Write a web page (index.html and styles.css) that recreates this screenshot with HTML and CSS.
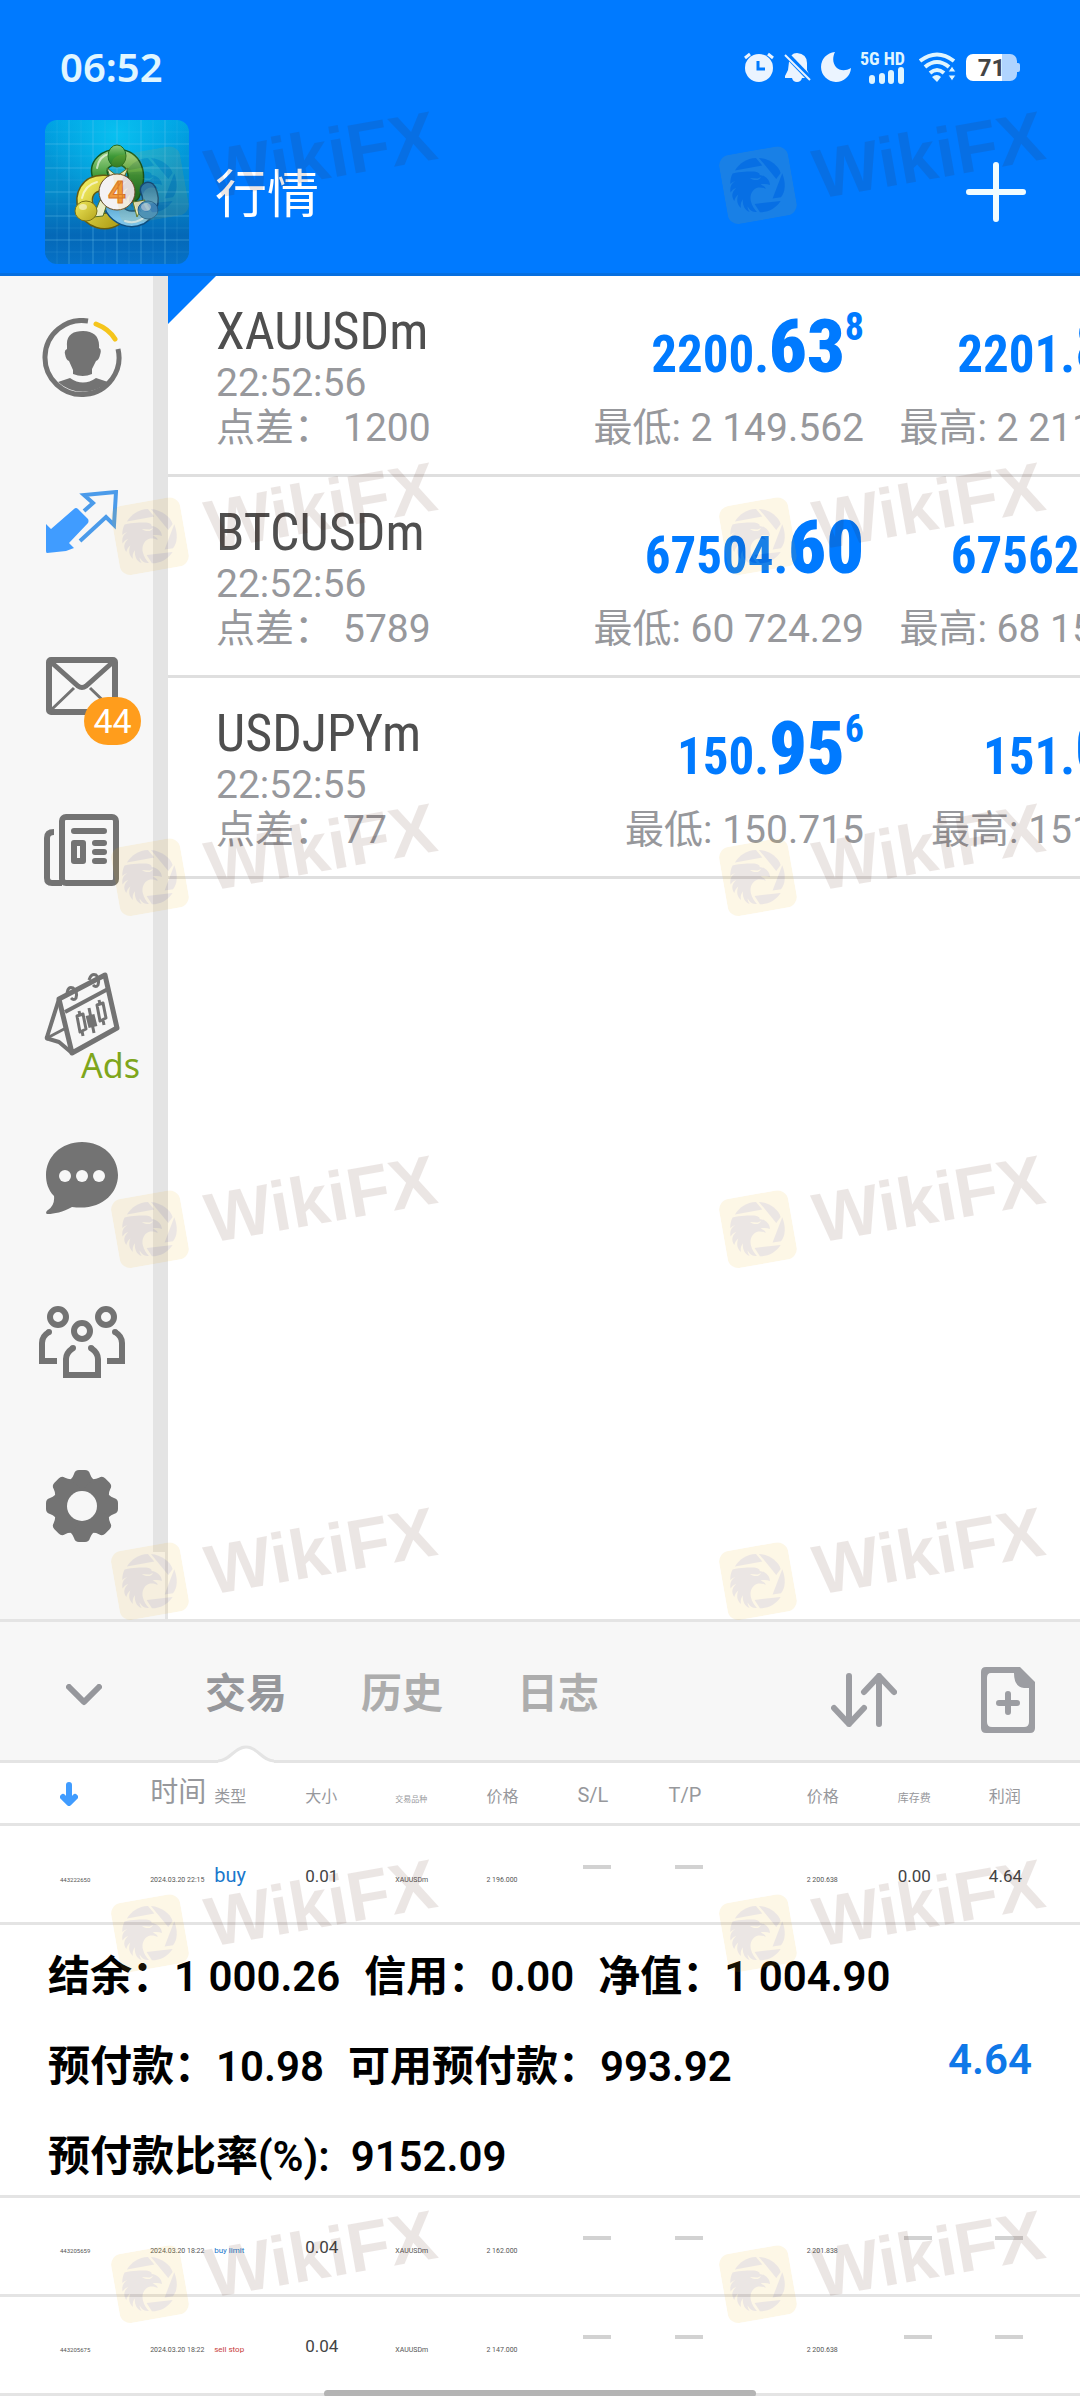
FILE: index.html
```html
<!DOCTYPE html>
<html lang="zh-CN">
<head>
<meta charset="utf-8">
<meta name="viewport" content="width=device-width">
<title>行情</title>
<link rel="stylesheet" href="styles.css">
</head>
<body>
<svg class="defs" aria-hidden="true">
  <symbol id="eagle" viewBox="0 0 70 70">
    <rect class="tile" width="70" height="70" rx="11"/>
    <g transform="translate(35 35) rotate(10) scale(.3333) translate(-181 -298)">
      <path d="M112 254C124 232 148 217 175 216L194 239Z"/>
      <path d="M184 216C215 219 242 238 249 261L236 279Z"/>
      <path d="M254 262C265 290 264 318 250 334L225 338Z"/>
      <path d="M171 354L249 345C235 367 212 379 187 379Z"/>
      <path d="M105 263C130 257 155 257 170 257C181 259 187 262 186 267C202 268 217 282 217 297C208 293 198 294 189 295C198 301 204 303 204 309C198 305 186 303 177 306C161 313 156 331 160 347C163 360 170 370 178 378C163 380 156 372 150 362C150 368 152 373 156 378C140 374 134 355 136 340C128 350 129 360 130 366C118 356 116 342 122 326C115 332 112 338 110 345C100 330 103 318 116 306C108 308 102 314 99 320C96 304 100 294 113 285C107 287 102 290 98 294C98 282 100 272 105 263Z"/>
      <path class="tile" d="M157 276L180 278L190 273C187 283 172 287 157 276Z"/>
    </g>
  </symbol>
</svg>
<div class="app">
  <header class="header">
    <div class="status">
      <time class="clock">06:52</time>
      <div class="status-icons">
        <svg width="30" height="30" viewBox="0 0 30 30"><circle cx="15" cy="16" r="14" fill="#ebf4ff"/><path d="M1 6L6 2M24 2L29 6" stroke="#ebf4ff" stroke-width="3"/><path d="M14 9V17H21" fill="none" stroke="#007aff" stroke-width="3"/></svg>
        <svg width="27" height="30" viewBox="0 0 27 30"><path d="M5 10Q6 1 13 1Q23 2 23 11V18L26 24V26H18Q17 30 13 30Q9 30 8 26H1V24L4 18Z" fill="#ebf4ff"/><path d="M0 0L28 29" stroke="#007aff" stroke-width="6"/><path d="M1 3L26 28" stroke="#ebf4ff" stroke-width="2"/></svg>
        <svg width="30" height="30" viewBox="0 0 30 30"><path d="M14 0A15 15 0 1 0 30 16C18 23 8 12 14 0Z" fill="#ebf4ff"/></svg>
        <div class="signal"><span>5G HD</span><svg width="36" height="17" viewBox="0 0 36 17"><path d="M3 11V14M13 9V14M22 6V14M32 3V14" stroke="#dff5ff" stroke-width="6" stroke-linecap="round"/></svg></div>
        <svg width="37" height="30" viewBox="0 0 37 30"><g fill="none" stroke="#dff5ff" stroke-width="4"><path d="M1 9Q18 -4 35 9"/><path d="M6 15Q18 5 30 15"/><path d="M11 21Q18 15 25 21"/></g><path d="M13 25Q18 21 22 25L18 30Z" fill="#dff5ff"/><path d="M29 20L33 14L37 20ZM29 23H37L33 29Z" fill="#dff5ff" stroke="#007aff"/></svg>
        <div class="battery"><span>71</span></div>
      </div>
    </div>
    <div class="appbar">
      <svg class="logo" width="144" height="144" viewBox="0 0 144 144" role="img" aria-label="MetaTrader 4">
        <defs>
          <linearGradient id="sea" x2="0" y2="1"><stop offset="0" stop-color="#00a2e4"/><stop offset=".5" stop-color="#058bcb"/><stop offset=".8" stop-color="#0468b7"/><stop offset="1" stop-color="#0671c6"/></linearGradient>
          <radialGradient id="glow" cy=".1"><stop offset="0" stop-color="#08c0f0"/><stop offset="1" stop-color="#08c0f0" stop-opacity="0"/></radialGradient>
          <linearGradient id="green" x2="0" y2="1"><stop offset="0" stop-color="#8fca7c"/><stop offset=".5" stop-color="#3f9a38"/><stop offset="1" stop-color="#1f7726"/></linearGradient>
          <linearGradient id="gold" x2="1" y2="1"><stop offset="0" stop-color="#f0e95c"/><stop offset="1" stop-color="#b5a51c"/></linearGradient>
          <linearGradient id="blue" x2="0" y2="1"><stop offset="0" stop-color="#2f83b5"/><stop offset="1" stop-color="#7cc4ea"/></linearGradient>
        </defs>
        <rect width="144" height="144" rx="12" fill="url(#sea)"/>
        <rect width="144" height="144" rx="12" fill="url(#glow)"/>
        <path d="M24 0V144M48 0V144M72 0V144M96 0V144M120 0V144M0 24H144M0 48H144M0 72H144M0 96H144M0 120H144" stroke="#6fc8f0" stroke-opacity=".4"/>
        <path d="M12 0V144M36 0V144M60 0V144M84 0V144M108 0V144M132 0V144M0 12H144M0 36H144M0 60H144M0 84H144M0 108H144M0 132H144" stroke="#6fc8f0" stroke-opacity=".14"/>
        <g fill="none" stroke-linecap="round">
          <path d="M56 58C50 44 62 37 73 37C88 38 96 52 87 74" stroke="#14591f" stroke-width="17"/>
          <path d="M56 58C50 44 62 37 73 37C88 38 96 52 87 74" stroke="url(#green)" stroke-width="14"/>
          <path d="M60 63C42 62 37 76 41 88C46 101 60 104 70 98" stroke="#655c10" stroke-width="17"/>
          <path d="M60 63C42 62 37 76 41 88C46 101 60 104 70 98" stroke="url(#gold)" stroke-width="14"/>
          <path d="M103 70C109 82 103 92 95 97C84 102 73 96 68 88" stroke="#0f4f80" stroke-width="17"/>
          <path d="M103 70C109 82 103 92 95 97C84 102 73 96 68 88" stroke="url(#blue)" stroke-width="14"/>
          <path d="M52 48Q54 36 64 34M37 78Q40 65 52 62M80 101Q92 105 102 95" stroke="#fff" stroke-opacity=".6" stroke-width="2"/>
        </g>
        <path d="M62 48L72 56L83 48L78 60H66ZM55 80L48 97L58 96L62 84ZM88 82L92 97L100 80Z" fill="#e9edc4" stroke="#52722a"/>
        <ellipse cx="72" cy="36" rx="9" ry="11" fill="url(#green)" stroke="#1f6b22"/>
        <ellipse cx="41" cy="91" rx="11" ry="10" fill="url(#gold)" stroke="#7b7213"/>
        <ellipse cx="103" cy="90" rx="10" ry="9" fill="#3c8fc8" stroke="#1d649a"/>
        <ellipse cx="101" cy="87" rx="5" ry="4" fill="#fff" fill-opacity=".5"/>
        <ellipse cx="38" cy="87" rx="4" ry="3" fill="#fff" fill-opacity=".5"/>
        <circle cx="72" cy="72" r="18" fill="#f4f2f4" stroke="#684d28"/>
        <text x="72" y="83" text-anchor="middle" class="logo-digit">4</text>
      </svg>
      <h1>行情</h1>
      <button class="plain add" aria-label="添加"><svg width="60" height="60" viewBox="0 0 60 60"><path d="M30 3V57M3 30H57" stroke="#f0fcff" stroke-width="6" stroke-linecap="round"/></svg></button>
    </div>
  </header>

  <main class="market">
    <nav class="sidebar">
      <div class="links">
        <a href="#account" aria-label="账户"><svg width="80" height="80" viewBox="0 0 80 80"><g fill="none" stroke-width="5"><path d="M46 3A37 37 0 1 0 76 31" stroke="#737373"/><path d="M54 6Q67 11 73 21" stroke="#f5c51c" stroke-linecap="round"/></g><path d="M25 28C24 17 31 13 41 13C52 13 58 19 57 30Q60 31 58 37Q57 42 54 43L50 51V56Q41 60 31 56V52L27 43Q24 42 23 36Q22 32 25 31ZM16 64L28 60Q41 69 54 60L66 64A37 37 0 0 1 16 64Z" fill="#737373"/></svg></a>
        <a href="#quotes" aria-label="行情"><svg width="72" height="64" viewBox="0 0 72 64"><path d="M0 34L5 39L28 19Q30 17 32 19L42 29Q43 31 42 33L23 53L28 58L20 61L1 63Q0 63 0 61Z" fill="#409cff"/><path d="M38 21L47 13L38 5L70 2L68 35L60 27L34 51" fill="none" stroke="#4b9bea" stroke-width="4"/></svg></a>
        <a href="#mail" aria-label="邮箱" class="mail"><svg width="72" height="58" viewBox="0 0 72 58"><rect x="3" y="3" width="66" height="52" rx="2" fill="none" stroke="#737373" stroke-width="6"/><path d="M5 5L32 29Q36 32 40 29L67 5" fill="none" stroke="#737373" stroke-width="5"/><path d="M4 54L28 31M68 54L44 31" stroke="#737373" stroke-width="3"/></svg><span class="badge">44</span></a>
        <a href="#news" aria-label="新闻"><svg width="76" height="72" viewBox="0 0 76 72"><g fill="none" stroke="#737373" stroke-width="6" stroke-linecap="round"><rect x="18" y="3" width="54" height="66" rx="4"/><path d="M10 18Q3 18 3 24V64Q3 69 8 69H18" stroke-linecap="butt"/><path d="M30 17H60M51 29H60M51 38H60M51 47H60"/></g><rect x="27" y="26" width="15" height="24" rx="3" fill="#737373"/><rect x="33" y="32" width="3" height="12" fill="#f7f7f7"/></svg></a>
        <a href="#calendar" aria-label="日历" class="calendar"><svg width="76" height="84" viewBox="0 0 76 84"><g fill="none" stroke="#737373" stroke-width="5" stroke-linejoin="round"><path d="M15 27L61 3L73 56L28 81Z"/><path d="M21 40L64 17M15 27L3 65Q2 67 5 67L15 70L28 81" stroke-width="4"/><path d="M5 65L22 56" stroke-width="3"/><g stroke-width="3"><path d="M23 21Q24 14 29 16Q34 20 32 26Q30 29 27 26M45 8Q47 1 52 3Q56 7 54 13Q52 16 49 13"/><path d="M35 39L36 43M38 59L39 64M33 44L39 42L42 57L36 60ZM55 28L56 32M59 48L60 53M53 33L59 31L62 46L56 49Z"/><path d="M45 36L50 61"/></g><path d="M46 43L49 55" stroke-width="9" stroke-linejoin="miter"/></g></svg><span class="ads">Ads</span></a>
        <a href="#chat" aria-label="聊天"><svg width="72" height="72" viewBox="0 0 72 72"><path d="M36 0C57 0 72 15 72 33C72 52 55 69 26 65C17 70 8 72 2 72C-1 72 0 69 2 68Q9 63 8 54C2 48 0 40 0 33C0 15 15 0 36 0Z" fill="#737373"/><g fill="#f7f7f7"><circle cx="19" cy="34" r="6"/><circle cx="36" cy="34" r="6"/><circle cx="53" cy="34" r="6"/></g></svg></a>
        <a href="#community" aria-label="社区"><svg width="86" height="72" viewBox="0 0 86 72"><g fill="none" stroke="#737373" stroke-width="6"><ellipse cx="19" cy="11" rx="8" ry="8"/><ellipse cx="67" cy="11" rx="8" ry="8"/><ellipse cx="43" cy="25" rx="8" ry="8"/><g stroke-linejoin="miter"><path d="M10 26Q3 30 3 37V55H18M76 26Q83 30 83 37V55H68M34 42Q27 47 27 53V69H59V53Q59 47 52 42"/></g></g><g fill="#737373"><circle cx="10" cy="26" r="3"/><circle cx="76" cy="26" r="3"/><circle cx="34" cy="42" r="3"/><circle cx="52" cy="42" r="3"/></g></svg></a>
        <a href="#settings" aria-label="设置"><svg width="72" height="72" viewBox="-36 -36 72 72"><g fill="#737373"><circle r="29"/><path id="cog" d="M-11 -27Q-9 -29 -8 -32Q-7 -36 -3 -36H3Q7 -36 8 -32Q9 -29 11 -27V0H-11Z"/><use href="#cog" transform="rotate(45)"/><use href="#cog" transform="rotate(90)"/><use href="#cog" transform="rotate(135)"/><use href="#cog" transform="rotate(180)"/><use href="#cog" transform="rotate(225)"/><use href="#cog" transform="rotate(270)"/><use href="#cog" transform="rotate(315)"/></g><circle r="15" fill="#f7f7f7"/></svg></a>
      </div>
      <div class="track"></div>
    </nav>
    <section class="quotes">
      <article class="quote">
        <div><h2>XAUUSDm</h2><p>22:52:56</p><p><span>点差：</span><span class="spread">1200</span></p></div>
        <div class="side"><p class="price">2200.<b>63</b><sup>8</sup></p><p>最低: 2 149.562</p></div>
        <div class="side"><p class="price">2201.<b>83</b><sup>8</sup></p><p>最高: 2 211.562</p></div>
      </article>
      <article class="quote">
        <div><h2>BTCUSDm</h2><p>22:52:56</p><p><span>点差：</span><span class="spread">5789</span></p></div>
        <div class="side"><p class="price">67504.<b>60</b></p><p>最低: 60 724.29</p></div>
        <div class="side"><p class="price">67562.<b>49</b></p><p>最高: 68 154.29</p></div>
      </article>
      <article class="quote">
        <div><h2>USDJPYm</h2><p>22:52:55</p><p><span>点差：</span><span class="spread">77</span></p></div>
        <div class="side"><p class="price">150.<b>95</b><sup>6</sup></p><p>最低: 150.715</p></div>
        <div class="side"><p class="price">151.<b>03</b><sup>3</sup></p><p>最高: 151.815</p></div>
      </article>
    </section>
  </main>

  <section class="terminal">
    <div class="toolbar">
      <button class="plain collapse" aria-label="收起"><svg width="36" height="22" viewBox="0 0 36 22"><path d="M3 3L18 18L33 3" fill="none" stroke="#96979c" stroke-width="6" stroke-linecap="round" stroke-linejoin="round"/></svg></button>
      <div class="tabs">
        <button class="tab active">交易<svg class="bump" width="56" height="18" viewBox="0 0 56 18"><path d="M0 16C12 16 16 2 28 2C40 2 44 16 56 16V18H0Z" fill="#fff"/><path d="M0 16C12 16 16 2 28 2C40 2 44 16 56 16" fill="none" stroke="#e4e4e4" stroke-width="3"/></svg></button>
        <button class="tab">历史</button>
        <button class="tab">日志</button>
      </div>
      <div class="actions">
        <button class="plain" aria-label="排序"><svg width="66" height="54" viewBox="0 0 66 54"><path d="M18 3V51M3 35L18 51L33 35M48 51V3M33 19L48 3L63 19" fill="none" stroke="#9c9da2" stroke-width="6" stroke-linecap="round" stroke-linejoin="round"/></svg></button>
        <button class="plain" aria-label="新订单"><svg width="54" height="66" viewBox="0 0 54 66"><path d="M5 0H39L54 15V61Q54 66 49 66H5Q0 66 0 61V5Q0 0 5 0Z" fill="#9c9da2"/><path d="M10 6H33Q33 20 43 21H48V55Q48 60 43 60H11Q6 60 6 55V11Q6 6 10 6Z" fill="#f7f7f7"/><path d="M27 27V45M18 36H36" stroke="#9c9da2" stroke-width="6" stroke-linecap="round"/></svg></button>
      </div>
    </div>
    <table class="orders">
      <colgroup><col class="c-id"><col class="c-time"><col><col class="c-n"><col><col><col><col class="c-tp"><col><col><col></colgroup>
      <thead>
        <tr>
          <th><svg width="18" height="24" viewBox="0 0 18 24" role="img" aria-label="订单"><path d="M9 3V20M3 15L9 21L15 15" fill="none" stroke="#409cff" stroke-width="6" stroke-linecap="round" stroke-linejoin="round"/></svg></th>
          <th class="xl">时间</th><th>类型</th><th>大小</th><th class="xs">交易品种</th><th>价格</th><th class="l">S/L</th><th class="l">T/P</th><th>价格</th><th class="s">库存费</th><th>利润</th>
        </tr>
      </thead>
      <tbody>
        <tr><td class="t">443222650</td><td>2024.03.20 22:15</td><td class="l buy">buy</td><td class="m">0.01</td><td>XAUUSDm</td><td>2 196.000</td><td><i></i></td><td><i></i></td><td>2 200.638</td><td class="m">0.00</td><td class="m">4.64</td></tr>
        <tr class="summary"><td colspan="11"><div class="sum">
          <div class="figures">
            <div><span>结余：1 000.26</span><span>信用：0.00</span><span>净值：1 004.90</span></div>
            <div><span>预付款：10.98</span><span>可用预付款：993.92</span></div>
            <div><span>预付款比率(%):&nbsp; 9152.09</span></div>
          </div>
          <strong>4.64</strong>
        </div></td></tr>
        <tr><td class="t">443205659</td><td>2024.03.20 18:22</td><td class="s buy">buy limit</td><td class="m">0.04</td><td>XAUUSDm</td><td>2 162.000</td><td><i></i></td><td><i></i></td><td>2 201.838</td><td><i></i></td><td><i></i></td></tr>
        <tr><td class="t">443205675</td><td>2024.03.20 18:22</td><td class="s sell">sell stop</td><td class="m">0.04</td><td>XAUUSDm</td><td>2 147.000</td><td><i></i></td><td><i></i></td><td>2 200.638</td><td><i></i></td><td><i></i></td></tr>
      </tbody>
    </table>
  </section>
  <div class="home-bar"></div>

  <div class="watermarks" aria-hidden="true">
    <div class="mark"><svg width="70" height="70"><use href="#eagle"/></svg><span>WikiFX</span></div>
    <div class="mark"><svg width="70" height="70"><use href="#eagle"/></svg><span>WikiFX</span></div>
    <div class="mark"><svg width="70" height="70"><use href="#eagle"/></svg><span>WikiFX</span></div>
    <div class="mark"><svg width="70" height="70"><use href="#eagle"/></svg><span>WikiFX</span></div>
    <div class="mark"><svg width="70" height="70"><use href="#eagle"/></svg><span>WikiFX</span></div>
    <div class="mark"><svg width="70" height="70"><use href="#eagle"/></svg><span>WikiFX</span></div>
    <div class="mark"><svg width="70" height="70"><use href="#eagle"/></svg><span>WikiFX</span></div>
    <div class="mark"><svg width="70" height="70"><use href="#eagle"/></svg><span>WikiFX</span></div>
    <div class="mark"><svg width="70" height="70"><use href="#eagle"/></svg><span>WikiFX</span></div>
    <div class="mark"><svg width="70" height="70"><use href="#eagle"/></svg><span>WikiFX</span></div>
    <div class="mark"><svg width="70" height="70"><use href="#eagle"/></svg><span>WikiFX</span></div>
    <div class="mark"><svg width="70" height="70"><use href="#eagle"/></svg><span>WikiFX</span></div>
    <div class="mark"><svg width="70" height="70"><use href="#eagle"/></svg><span>WikiFX</span></div>
    <div class="mark"><svg width="70" height="70"><use href="#eagle"/></svg><span>WikiFX</span></div>
  </div>
</div>
</body>
</html>
```
FILE: styles.css
```css
* { box-sizing: border-box; }
body { margin: 0; background: #fff; font-family: Roboto, "Noto Sans CJK SC", sans-serif; color: #97989c; }
h1, h2, p { margin: 0; font-weight: 400; }
svg { display: block; flex: none; }
.defs { position: absolute; width: 0; height: 0; }
.app { position: relative; overflow: hidden; }
.plain { border: 0; padding: 0; background: none; }

.header { background: #007aff; border-bottom: 3px solid #066fe0; color: #fff; }
.status { display: flex; justify-content: space-between; align-items: center; height: 120px; padding: 14px 60px 0; }
.clock { font: 600 40px/48px "Noto Sans", sans-serif; color: #e0f6ff; }
.status-icons { display: flex; align-items: center; gap: 10px; }
.signal { display: flex; flex-direction: column; align-items: flex-end; width: 48px; margin: 0 4px 0 -4px; font-family: "Roboto Condensed", Roboto, sans-serif; font-size: 18px; line-height: 17px; font-weight: 700; color: #dff5ff; white-space: nowrap; }
.battery { position: relative; width: 51px; height: 27px; margin-right: 3px; border-radius: 7px; background: linear-gradient(90deg, #fff 71%, #b0d4ff 71%); color: #444; font-size: 24px; line-height: 28px; font-weight: 700; text-align: center; }
.battery::after { content: ""; position: absolute; right: -3px; top: 9px; width: 3px; height: 9px; border-radius: 0 2px 2px 0; background: #b0d4ff; }
.appbar { display: flex; align-items: center; gap: 26px; padding: 0 54px 9px 45px; }
.logo-digit { font: 700 31px Roboto, sans-serif; fill: #f29a3c; stroke: #d9742a; }
.appbar h1 { padding-top: 8px; font-size: 52px; line-height: 60px; }
.add { margin-left: auto; }

.market { display: flex; }
.sidebar { display: flex; width: 168px; flex: none; background: #f7f7f7; border-right: 3px solid #e4e4e4; }
.links { width: 153px; padding-bottom: 31px; }
.links a { position: relative; display: flex; align-items: center; justify-content: center; height: 164px; padding-left: 11px; text-decoration: none; }
.track { width: 12px; height: 95%; background: #e4e4e4; }
.badge { position: absolute; left: 84px; top: 93px; width: 57px; height: 48px; border-radius: 24px; background: #ff9d1c; color: #fff; font-size: 34px; line-height: 48px; text-align: center; }
.ads { position: absolute; left: 81px; top: 113px; font: 34px/40px "Noto Sans", sans-serif; color: #7fa61c; }

.quotes { position: relative; flex: 1; min-width: 0; overflow: hidden; }
.quotes::before { content: ""; position: absolute; left: 0; top: 0; width: 48px; height: 48px; background: #007aff; clip-path: polygon(0 0, 100% 0, 0 100%); }
.quote { display: grid; grid-template-columns: 1fr 306px 306px; margin-right: -90px; height: 201px; padding: 27px 0 0 48px; border-bottom: 3px solid #dfdfdf; font-size: 39px; line-height: 45px; white-space: nowrap; }
.quote h2 { font-family: "Roboto Condensed", "Liberation Sans Narrow", Roboto, sans-serif; font-size: 52px; line-height: 58px; color: #4f4f4f; }
.spread { margin-left: 10px; }
.side { text-align: right; }
.price { height: 103px; font-family: "Roboto Condensed", "Liberation Sans Narrow", Roboto, sans-serif; font-weight: 700; font-size: 51px; line-height: 103px; color: #007aff; }
.price b { font-size: 74px; line-height: 0; }
.price sup { font-size: 38px; line-height: 0; vertical-align: 32px; }

.terminal { border-top: 3px solid #e4e4e4; }
.toolbar { display: flex; align-items: center; height: 141px; padding: 0 45px 0 66px; background: #f7f7f7; border-bottom: 3px solid #e4e4e4; }
.collapse { padding-top: 8px; }
.tabs { display: flex; align-self: stretch; margin-left: 66px; }
.tab { position: relative; width: 156px; padding: 0 0 2px; border: 0; background: none; font: 700 41px "Noto Sans CJK SC", sans-serif; color: #adadad; }
.tab.active { color: #96979b; }
.bump { position: absolute; left: 50px; bottom: -3px; }
.actions { display: flex; align-items: center; gap: 84px; margin-left: auto; padding-top: 18px; }

.orders { width: 100%; table-layout: fixed; border-collapse: separate; border-spacing: 0; }
.orders col { width: 91px; }
.orders .c-id { width: 150px; }
.orders .c-time { width: 64px; }
.orders .c-n { width: 90px; }
.orders .c-tp { width: 138px; }
.orders th, .orders td { height: 99px; padding: 37px 0 0; border-bottom: 3px solid #e4e4e4; text-align: left; vertical-align: baseline; white-space: nowrap; font-size: 7px; line-height: 24px; color: #555; }
.orders th { height: 63px; padding: 10px 0 0; font-size: 16px; line-height: 40px; font-weight: 400; color: #97989c; }
.orders th:first-child, .orders td.t { padding-left: 60px; }
.orders .t { font-size: 6px; }
.orders .xl { font-size: 28px; }
.orders .l { font-size: 20px; }
.orders .m { font-size: 17px; color: #444; }
.orders .s { font-size: 11px; }
.orders td.s { font-size: 8px; }
.orders .xs { font-size: 8px; }
.orders th svg { display: inline-block; vertical-align: -4px; }
.orders .buy { color: #1a78cc; }
.orders .sell { color: #c83c3c; }
.orders i { display: inline-block; width: 28px; height: 4px; margin-left: 6px; background: #d2d2d2; vertical-align: 13px; }
.orders .summary td { height: 273px; padding: 0 48px; }
.sum { display: flex; align-items: center; justify-content: space-between; font-weight: 600; font-size: 42px; line-height: 90px; color: #000; }
.figures div { display: flex; gap: 24px; height: 90px; padding-top: 7px; }
.sum strong { font-weight: 600; color: #0f78e8; }
.home-bar { position: absolute; left: 30%; bottom: -1px; width: 40%; height: 7px; border-radius: 4px; background: #b4b4b4; }

.watermarks { position: absolute; inset: 0; overflow: hidden; pointer-events: none; display: grid; grid-template-columns: 608px 608px; grid-template-rows: 351px 341px 352px 352px 352px 351px 352px; padding: 128px 0 0 113px; }
.mark { display: flex; align-items: center; gap: 22px; width: 326px; height: 70px; transform: rotate(-10deg); opacity: .1; color: #481200; fill: #481200; }
.mark span { font: 700 70px/70px "Liberation Sans", sans-serif; }
.tile { fill: #efb414; }
```
